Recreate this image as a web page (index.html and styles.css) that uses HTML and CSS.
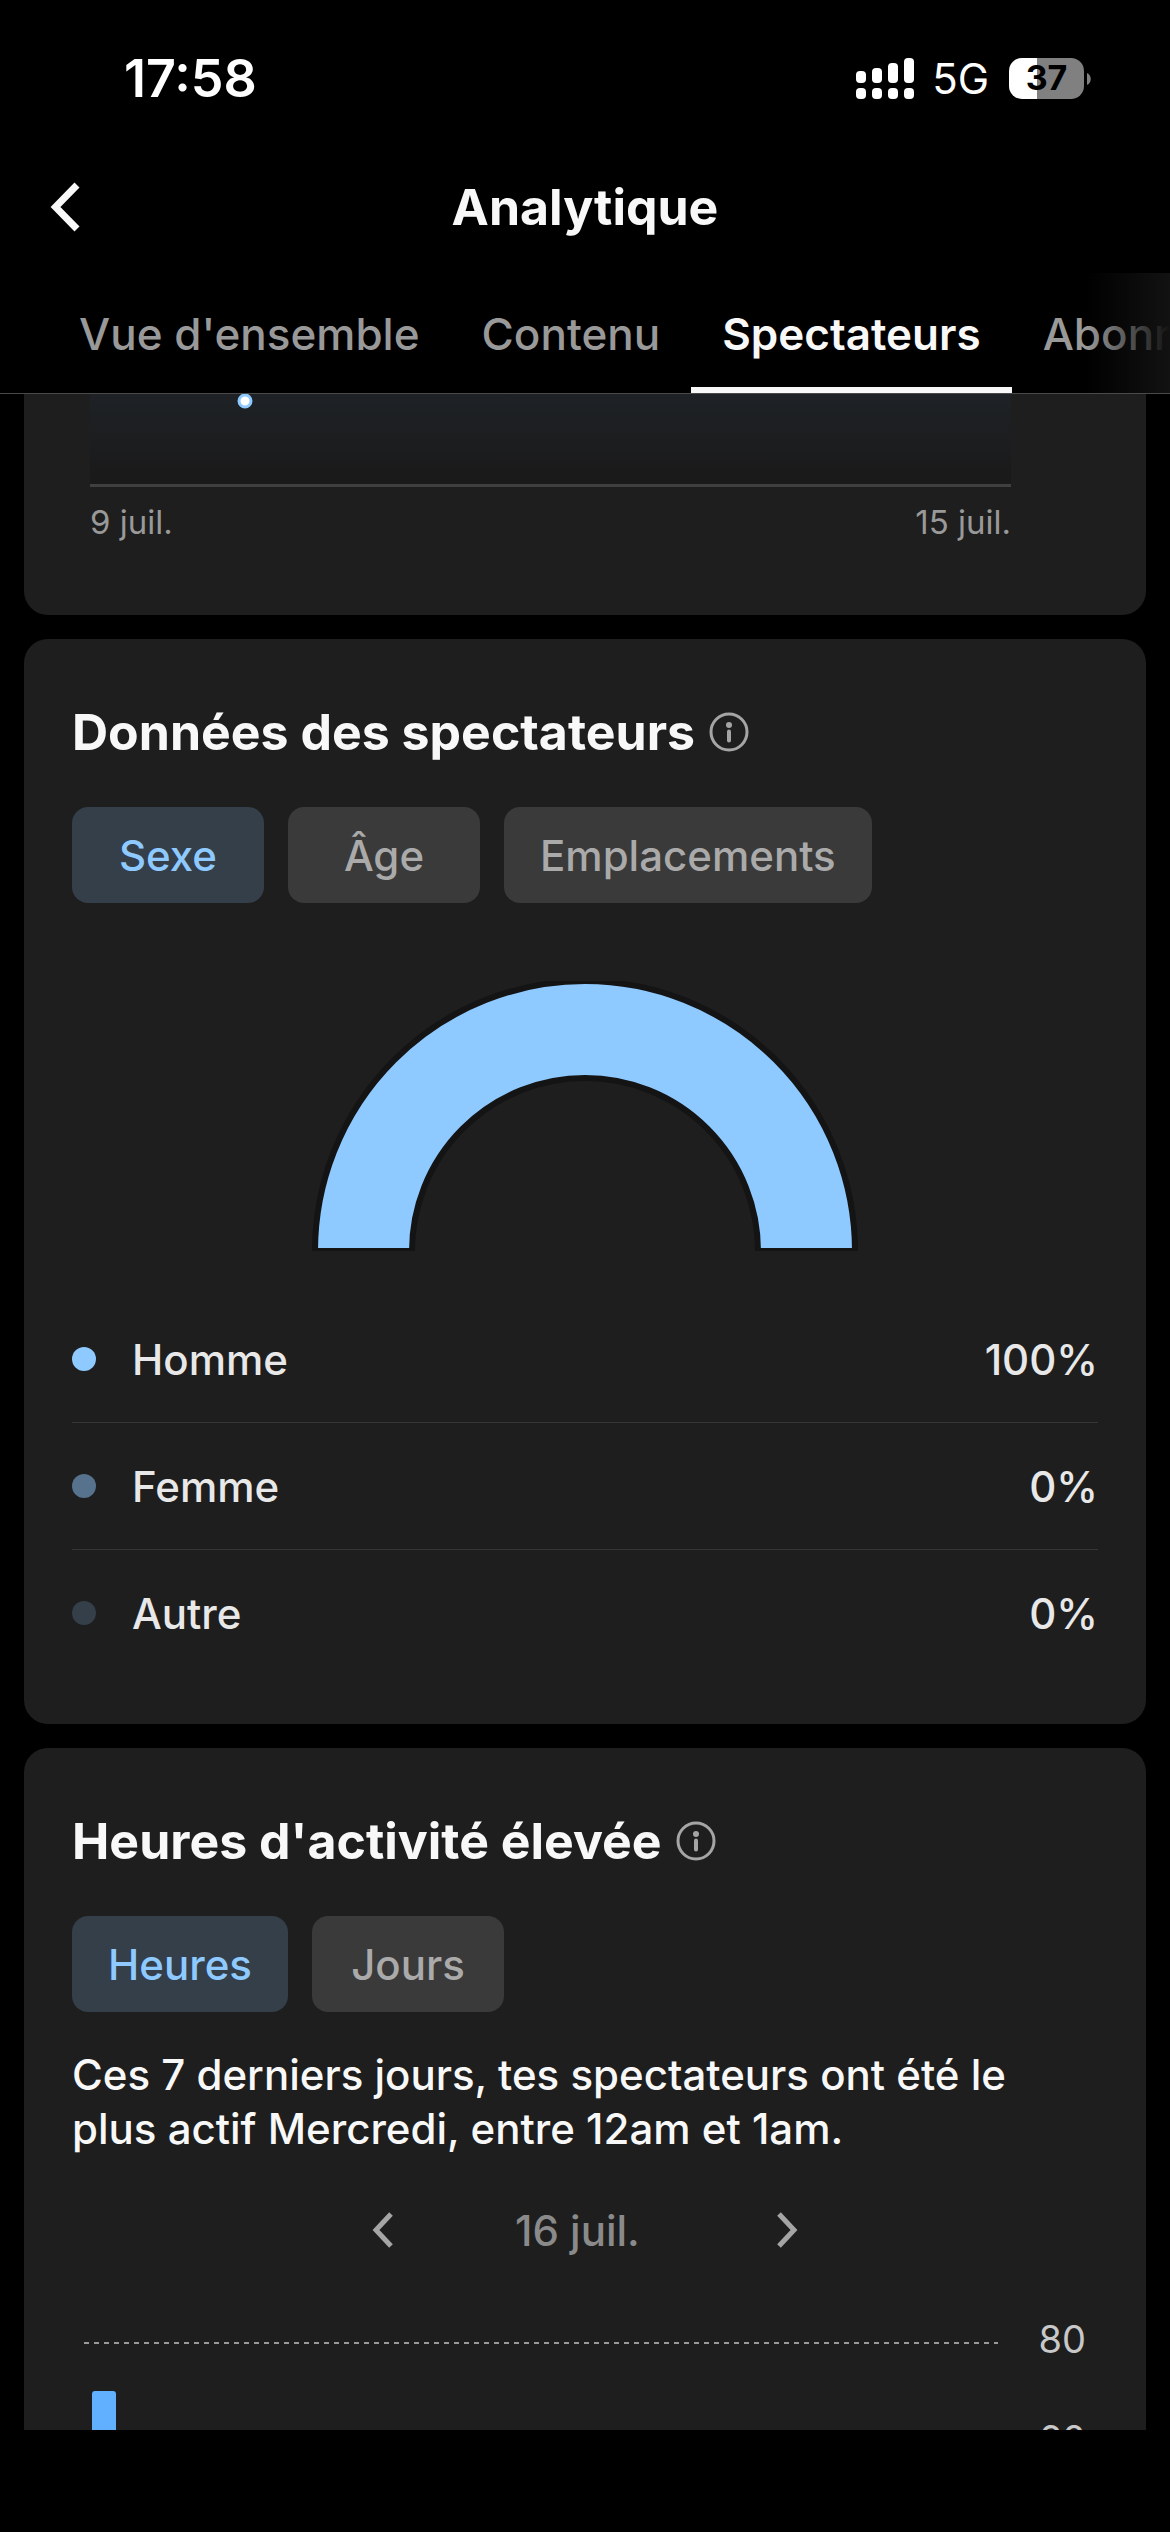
FILE: index.html
```
<!DOCTYPE html>
<html lang="fr">
<head>
  <meta charset="UTF-8" />
  <meta name="viewport" content="width=device-width, initial-scale=1.0"/>
  <title>Analytique</title>
  <link rel="stylesheet" href="styles.css">
</head>
<body>
  <div class="status-bar">
    <span class="time">17:58</span>
    <div class="status-icons">
      <svg class="signal" viewBox="0 0 58 41" fill="#fff">
        <rect x="0" y="13" width="10" height="12" rx="4"/>
        <rect x="16" y="10" width="10" height="15" rx="4"/>
        <rect x="32" y="5" width="10" height="20" rx="4"/>
        <rect x="48" y="0" width="10" height="25" rx="4"/>
        <rect x="0" y="30" width="10" height="11" rx="4"/>
        <rect x="16" y="30" width="10" height="11" rx="4"/>
        <rect x="32" y="30" width="10" height="11" rx="4"/>
        <rect x="48" y="30" width="10" height="11" rx="4"/>
      </svg>
      <span class="network">5G</span>
      <div class="battery">
        <span class="battery-level">37</span>
        <svg class="battery-tip" viewBox="0 0 4 12"><path d="M0 0C5 2 5 10 0 12Z" fill="#808080"/></svg>
      </div>
    </div>
  </div>

  <header class="header">
    <button class="back" aria-label="Retour">
      <svg viewBox="0 0 32 54" fill="none" stroke="#f8f8f8" stroke-width="7"><path d="M29 5L7.500 27 29 49"/></svg>
    </button>
    <h1>Analytique</h1>
  </header>

  <nav class="tabs">
    <a href="#">Vue d'ensemble</a>
    <a href="#">Contenu</a>
    <a href="#" class="active">Spectateurs</a>
    <a href="#">Abonnés</a>
  </nav>

  <main class="content">
    <section class="card card-trend">
      <div class="trend">
        <svg class="trend-point" viewBox="0 0 16 16"><circle cx="8" cy="8" r="6" fill="#fff" stroke="#8ec9ff" stroke-width="3"/></svg>
      </div>
      <div class="trend-labels">
        <span>9 juil.</span>
        <span>15 juil.</span>
      </div>
    </section>

    <section class="card card-viewers">
      <h2>Données des spectateurs
        <svg class="info" viewBox="0 0 40 40"><circle cx="20" cy="20" r="18" fill="none" stroke="#a5a5a5" stroke-width="3"/><circle cx="20" cy="13" r="3" fill="#a5a5a5"/><path d="M20 19.500v9" stroke="#a5a5a5" stroke-width="4" stroke-linecap="round"/></svg>
      </h2>
      <div class="pills">
        <button class="pill selected">Sexe</button>
        <button class="pill">Âge</button>
        <button class="pill">Emplacements</button>
      </div>
      <svg class="gauge" viewBox="0 0 546 270">
        <path d="M3 270A270 270 0 0 1 543 270H446A173 173 0 0 0 100 270Z" fill="#8ec9ff" stroke="#141414" stroke-width="6"/>
      </svg>
      <ul class="legend">
        <li><span class="dot dot-homme"></span>Homme<span class="value">100%</span></li>
        <li><span class="dot dot-femme"></span>Femme<span class="value">0%</span></li>
        <li><span class="dot dot-autre"></span>Autre<span class="value">0%</span></li>
      </ul>
    </section>

    <section class="card card-hours">
      <h2>Heures d'activité élevée
        <svg class="info" viewBox="0 0 40 40"><circle cx="20" cy="20" r="18" fill="none" stroke="#a5a5a5" stroke-width="3"/><circle cx="20" cy="13" r="3" fill="#a5a5a5"/><path d="M20 19.500v9" stroke="#a5a5a5" stroke-width="4" stroke-linecap="round"/></svg>
      </h2>
      <div class="pills">
        <button class="pill selected">Heures</button>
        <button class="pill">Jours</button>
      </div>
      <p class="summary">Ces 7 derniers jours, tes spectateurs ont été le plus actif Mercredi, entre 12am et 1am.</p>
      <div class="date-nav">
        <button aria-label="Jour précédent"><svg viewBox="0 0 24 40" fill="none" stroke="#a5a5a5" stroke-width="5"><path d="M20 4L5 20l15 16"/></svg></button>
        <span>16 juil.</span>
        <button aria-label="Jour suivant"><svg viewBox="0 0 24 40" fill="none" stroke="#a5a5a5" stroke-width="5"><path d="M4 4l15 16L4 36"/></svg></button>
      </div>
      <div class="hours-chart">
        <div class="plot">
          <div class="bar"></div>
        </div>
        <div class="scale">
          <span>80</span>
          <span>60</span>
        </div>
      </div>
    </section>
  </main>
  <div class="bottom-bar"></div>
</body>
</html>
```
FILE: styles.css
```
* {
  box-sizing: border-box;
}

body {
  margin: 0;
  height: 100vh;
  display: flex;
  flex-direction: column;
  background: #000;
  color: #f8f8f8;
  font-family: Inter, "Noto Sans", sans-serif;
  font-size: 42px;
  overflow: hidden;
}

button {
  border: none;
  background: none;
  padding: 0;
  font: inherit;
  color: inherit;
  cursor: pointer;
}

svg {
  display: block;
}

/* status bar */
.status-bar {
  display: flex;
  justify-content: space-between;
  align-items: center;
  height: 156px;
  padding: 0 79px 0 124px;
  flex-shrink: 0;
  color: #fff;
}

.time {
  font-size: 52px;
  font-weight: 600;
}

.status-icons {
  display: flex;
  align-items: center;
}

.signal {
  width: 58px;
  height: 41px;
}

.network {
  margin: 0 20px 0 18px;
}

.battery {
  position: relative;
  display: flex;
  justify-content: center;
  align-items: center;
  width: 75px;
  height: 41px;
  margin-right: 7px;
  border-radius: 13px;
  background: linear-gradient(to right, #fff 37%, #808080 37%);
}

.battery-level {
  color: #000;
  font-size: 34px;
  font-weight: 700;
  line-height: 40px;
}

.battery-tip {
  position: absolute;
  top: 15px;
  right: -7px;
  width: 4px;
  height: 12px;
}

/* header */
.header {
  display: grid;
  grid-template-columns: 80px 1fr 80px;
  align-items: center;
  height: 117px;
  padding: 0 48px 15px;
  flex-shrink: 0;
}

.back svg {
  width: 32px;
  height: 54px;
}

h1 {
  margin: 0;
  font-size: 50px;
  font-weight: 700;
  line-height: 60px;
  text-align: center;
}

.tabs {
  position: relative;
  display: flex;
  height: 121px;
  padding-left: 48px;
  border-bottom: 1px solid #4a4a4a;
  overflow: hidden;
  flex-shrink: 0;
}

.tabs a {
  flex-shrink: 0;
  padding: 0 31px;
  border-bottom: 6px solid transparent;
  color: #999;
  font-size: 44px;
  font-weight: 500;
  line-height: 122px;
  text-decoration: none;
}

.tabs .active {
  border-color: #f8f8f8;
  color: #f8f8f8;
  font-weight: 600;
}

.tabs::after {
  content: "";
  position: absolute;
  top: 0;
  right: 0;
  width: 84px;
  height: 100%;
  background: linear-gradient(to right, transparent, #121212);
}

/* cards */
.content {
  flex: 1;
  min-height: 0;
  padding: 0 24px;
  overflow: hidden;
}

.card {
  margin-bottom: 24px;
  padding: 63px 48px 48px;
  border-radius: 24px;
  background: #1e1e1e;
}

.card-trend {
  padding: 0 135px 72px 66px;
  border-radius: 0 0 24px 24px;
}

.trend {
  position: relative;
  height: 93px;
  border-bottom: 3px solid #404040;
  background: linear-gradient(#1e2226, #1a1a1a 90%);
  overflow: hidden;
}

.trend-point {
  position: absolute;
  top: -1px;
  left: 16%;
  width: 16px;
  height: 16px;
}

.trend-labels {
  display: flex;
  justify-content: space-between;
  padding-top: 15px;
  color: #999;
  font-size: 33px;
  line-height: 41px;
}

h2 {
  display: flex;
  align-items: center;
  gap: 14px;
  margin: 0 0 45px;
  font-size: 50px;
  font-weight: 700;
  line-height: 60px;
}

.info {
  width: 40px;
  height: 40px;
}

.pills {
  display: flex;
  gap: 24px;
}

.pill {
  min-width: 192px;
  height: 96px;
  padding: 0 36px;
  border-radius: 16px;
  background: #3a3a3a;
  color: #aaa;
  font-weight: 500;
}

.pill.selected {
  background: #343f4a;
  color: #8ec9ff;
}

.gauge {
  width: 546px;
  height: 270px;
  margin: 78px auto 45px;
}

.legend {
  margin: 0;
  padding: 0;
  list-style: none;
  color: #e8e8e8;
  font-weight: 500;
}

.legend li {
  display: flex;
  align-items: center;
  height: 127px;
  border-bottom: 1px solid #363636;
}

.legend li:last-child {
  height: 126px;
  border-bottom: none;
}

.dot {
  width: 24px;
  height: 24px;
  margin-right: 36px;
  border-radius: 50%;
}

.dot-homme {
  background: #8ec9ff;
}

.dot-femme {
  background: #56728c;
}

.dot-autre {
  background: #343f4a;
}

.value {
  margin-left: auto;
}

.summary {
  margin: 36px 0 44px;
  padding-right: 60px;
  font-weight: 500;
  line-height: 54px;
}

.date-nav {
  display: flex;
  justify-content: center;
  align-items: center;
  gap: 120px;
  height: 60px;
  color: #8a8a8a;
  font-weight: 500;
}

.date-nav span {
  min-width: 140px;
}

.date-nav svg {
  width: 24px;
  height: 40px;
}

/* activity by hour */
.hours-chart {
  display: flex;
  justify-content: space-between;
  margin-top: 54px;
  padding: 0 12px;
}

.plot {
  flex: 1;
  height: 300px;
  margin: 28px 40px 0 0;
  padding: 49px 0 0 8px;
  background: repeating-linear-gradient(to right, #999 0 5px, transparent 5px 10px) 0 0 / 100% 2px no-repeat;
}

.bar {
  width: 24px;
  height: 251px;
  border-radius: 3px 3px 0 0;
  background: #60b0ff;
}

.scale {
  color: #c8c8c8;
  font-size: 38px;
  line-height: 50px;
}

.scale span {
  display: block;
  margin-bottom: 50px;
}

.bottom-bar {
  height: 102px;
  flex-shrink: 0;
}
```
